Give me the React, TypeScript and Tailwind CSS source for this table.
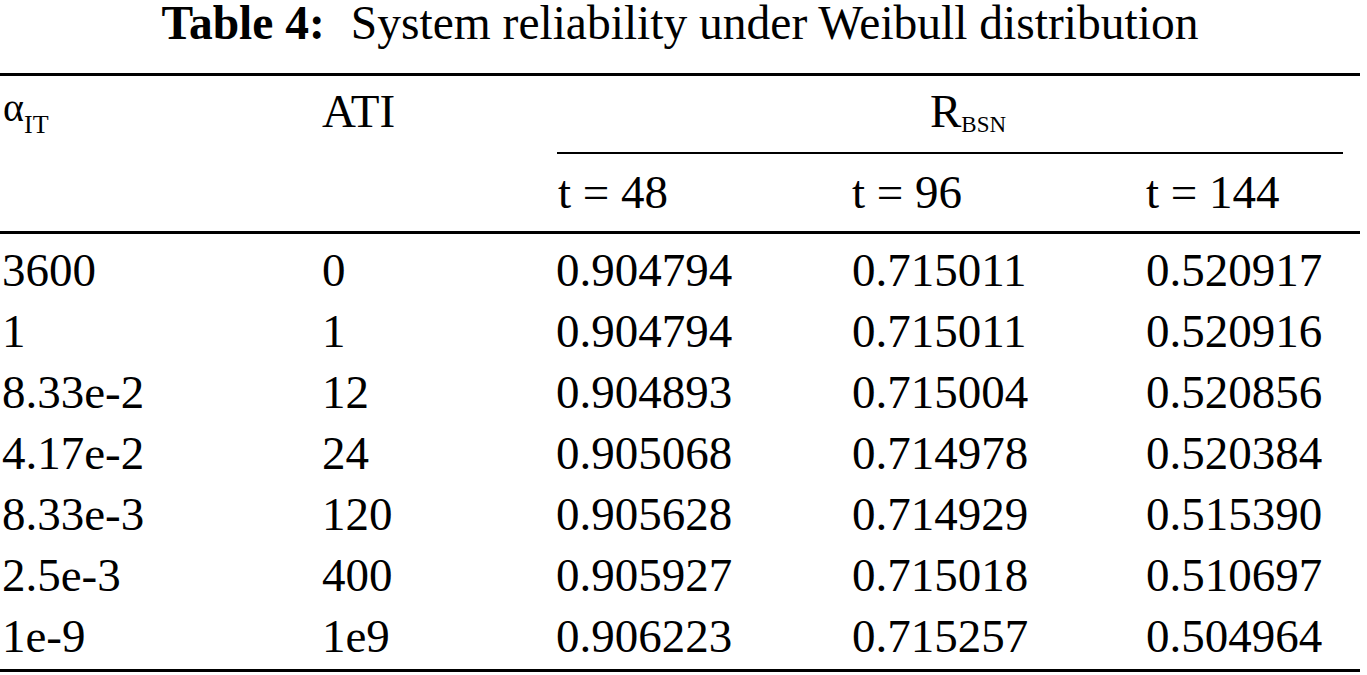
const rows = [
  ['3600', '0', '0.904794', '0.715011', '0.520917'],
  ['1', '1', '0.904794', '0.715011', '0.520916'],
  ['8.33e-2', '12', '0.904893', '0.715004', '0.520856'],
  ['4.17e-2', '24', '0.905068', '0.714978', '0.520384'],
  ['8.33e-3', '120', '0.905628', '0.714929', '0.515390'],
  ['2.5e-3', '400', '0.905927', '0.715018', '0.510697'],
  ['1e-9', '1e9', '0.906223', '0.715257', '0.504964'],
]

const cols = 'grid grid-cols-[322px_234px_296px_294px_214px]'

export default function App() {
  return (
    <div className="min-h-screen bg-white text-black font-['Liberation_Serif','Times_New_Roman',serif] text-[47px]">
      <div className="w-[1360px]">
        <h1 className="h-[73px] pt-[5px] text-center text-[47.5px] leading-[36px] font-normal">
          <span className="font-bold">Table 4:</span>
          <span className="ml-[26px]">System reliability under Weibull distribution</span>
        </h1>
        <div className="h-[3px] bg-black" />

        {/* header, first line */}
        <div className="grid grid-cols-[322px_235px_786px] h-[76px] items-start leading-[42px]">
          <div className="pt-[12px] pl-[3px] whitespace-nowrap">
            <span className="text-[40px] leading-none align-[4px]">α</span>
            <span className="text-[26px] leading-none align-[-8px]">IT</span>
          </div>
          <div className="pt-[14px]">ATI</div>
          <div className="pt-[14px] pl-[36px] text-center">
            R<span className="text-[23px] leading-none align-[-5px]">BSN</span>
          </div>
        </div>
        <div className="ml-[557px] w-[786px] h-[2px] bg-black" />

        {/* header, second line */}
        <div className={`${cols} h-[77px] items-start leading-[42px]`}>
          <div />
          <div />
          <div className="pt-[17px] pl-[2px]">t = 48</div>
          <div className="pt-[17px]">t = 96</div>
          <div className="pt-[17px]">t = 144</div>
        </div>
        <div className="h-[3px] bg-black" />

        <div className="pt-[6px] pb-[2px]">
          {rows.map((r) => (
            <div key={r[0]} className={`${cols} h-[61px] leading-[61px]`}>
              {r.map((c, i) => (
                <div key={i} className={i === 0 ? 'pl-[2px]' : ''}>
                  {c}
                </div>
              ))}
            </div>
          ))}
        </div>
        <div className="h-[3px] bg-black" />
      </div>
    </div>
  )
}
